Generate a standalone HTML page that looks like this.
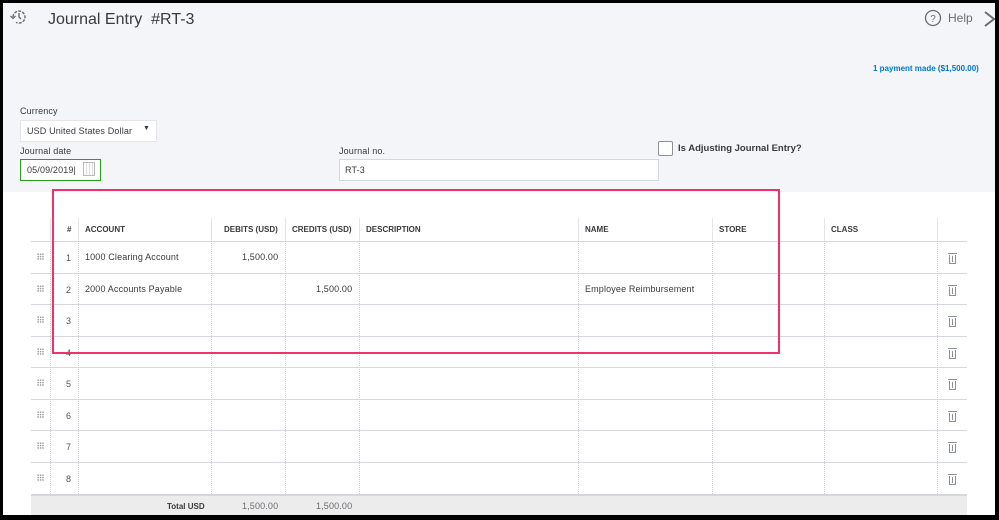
<!DOCTYPE html>
<html><head><meta charset="utf-8"><style>
*{margin:0;padding:0;box-sizing:border-box}
body{width:999px;height:520px;background:#000;position:relative;overflow:hidden;font-family:"Liberation Sans",sans-serif;color:#393a3d}
.page{position:absolute;left:3px;top:3px;width:992px;height:512px;background:#fff;overflow:hidden}
.top{position:absolute;left:0;top:0;width:992px;height:189px;background:#f4f5f8}
.a{position:absolute;white-space:nowrap}
.vl{position:absolute;width:0;border-left:1px dotted #cfd1d6}
.hl{position:absolute;height:1px;background:#d4d7dc}
.hs{position:absolute;width:1px;background:#e3e5e8}
.t{font-size:9px;letter-spacing:0.15px}
.h{font-size:8px;font-weight:bold;color:#393a3d}
.trash{position:absolute;width:7px;height:9px;border:1px solid #8d9096;border-top:none}
.trash:before{content:"";position:absolute;left:-2px;top:-2px;width:9px;height:1px;background:#8d9096}
.trash:after{content:"";position:absolute;left:2px;top:1px;width:1px;height:6px;background:#8d9096}
.dots{position:absolute;width:7px;height:7px;background-image:radial-gradient(#999 0.8px,transparent 0.9px);background-size:2.4px 2.4px}
</style></head><body>
<div class="page">
<div class="top"></div>
<svg class="a" style="left:6px;top:5px" width="20" height="18" viewBox="0 0 20 18"><path d="M4 9a6 6 0 1 1 3 5.3" fill="none" stroke="#6b6c72" stroke-width="1.4" stroke-dasharray="3 1.2"/><path d="M10 5v4l2 2" fill="none" stroke="#6b6c72" stroke-width="1.4"/><path d="M1.5 8l2.5 2.5 2.5-2.5" fill="none" stroke="#6b6c72" stroke-width="1.3"/></svg>
<div class="a" style="left:45px;top:8px;font-size:16px;color:#393a3d">Journal Entry &nbsp;#RT-3</div>
<svg class="a" style="left:921px;top:6px" width="18" height="18"><circle cx="9" cy="9" r="7.5" fill="none" stroke="#6b6c72" stroke-width="1.3"/><text x="9" y="13" font-size="10" text-anchor="middle" fill="#6b6c72" font-family="Liberation Sans">?</text></svg>
<div class="a" style="left:945px;top:8px;font-size:12px;color:#6b6c72">Help</div>
<svg class="a" style="left:981px;top:8px" width="12" height="16"><path d="M1 1l9 7-9 7" fill="none" stroke="#6b6c72" stroke-width="2"/></svg>
<div class="a" style="left:870px;top:61px;font-size:8px;color:#0077c5;font-weight:bold">1 payment made ($1,500.00)</div>
<div class="a t" style="left:17px;top:103px">Currency</div>
<div class="a" style="left:17px;top:117px;width:137px;height:22px;background:#fff;border:1px solid #e3e5e8"></div>
<div class="a t" style="left:24px;top:123px">USD United States Dollar</div>
<div class="a" style="left:140px;top:122px;font-size:7px">▼</div>
<div class="a t" style="left:17px;top:143px">Journal date</div>
<div class="a" style="left:17px;top:156px;width:81px;height:22px;background:#fff;border:1px solid #2ca01c"></div>
<div class="a t" style="left:24px;top:162px">05/09/2019|</div>
<div class="a" style="left:80px;top:159px;width:12px;height:14px;border:1px solid #bbb;background:repeating-linear-gradient(90deg,#fff 0 2px,#ddd 2px 3px)"></div>
<div class="a t" style="left:336px;top:143px">Journal no.</div>
<div class="a" style="left:336px;top:156px;width:320px;height:22px;background:#fff;border:1px solid #d4d7dc"></div>
<div class="a t" style="left:342px;top:162px">RT-3</div>
<div class="a" style="left:655px;top:138px;width:15px;height:15px;border:1px solid #8d9096;border-radius:2px;background:#fff"></div>
<div class="a" style="left:675px;top:140px;font-size:9.5px;font-weight:bold">Is Adjusting Journal Entry?</div>

<div class="hs" style="left:47px;top:215px;height:23px"></div>
<div class="hs" style="left:75px;top:215px;height:23px"></div>
<div class="hs" style="left:208px;top:215px;height:23px"></div>
<div class="hs" style="left:282px;top:215px;height:23px"></div>
<div class="hs" style="left:356px;top:215px;height:23px"></div>
<div class="hs" style="left:575px;top:215px;height:23px"></div>
<div class="hs" style="left:709px;top:215px;height:23px"></div>
<div class="hs" style="left:821px;top:215px;height:23px"></div>
<div class="hs" style="left:934px;top:215px;height:23px"></div>
<div class="a h" style="left:64px;top:222px">#</div>
<div class="a h" style="left:82px;top:222px">ACCOUNT</div>
<div class="a h" style="left:221px;top:222px">DEBITS (USD)</div>
<div class="a h" style="left:289px;top:222px">CREDITS (USD)</div>
<div class="a h" style="left:363px;top:222px">DESCRIPTION</div>
<div class="a h" style="left:582px;top:222px">NAME</div>
<div class="a h" style="left:716px;top:222px">STORE</div>
<div class="a h" style="left:828px;top:222px">CLASS</div>

<div class="vl" style="left:47px;top:238px;height:253px"></div>
<div class="vl" style="left:75px;top:238px;height:253px"></div>
<div class="vl" style="left:208px;top:238px;height:253px"></div>
<div class="vl" style="left:282px;top:238px;height:253px"></div>
<div class="vl" style="left:356px;top:238px;height:253px"></div>
<div class="vl" style="left:575px;top:238px;height:253px"></div>
<div class="vl" style="left:709px;top:238px;height:253px"></div>
<div class="vl" style="left:821px;top:238px;height:253px"></div>
<div class="vl" style="left:934px;top:238px;height:253px"></div>

<div class="hl" style="left:28px;top:238px;width:936px"></div>
<div class="hl" style="left:28px;top:270px;width:936px"></div>
<div class="hl" style="left:28px;top:301px;width:936px"></div>
<div class="hl" style="left:28px;top:333px;width:936px"></div>
<div class="hl" style="left:28px;top:364px;width:936px"></div>
<div class="hl" style="left:28px;top:396px;width:936px"></div>
<div class="hl" style="left:28px;top:427px;width:936px"></div>
<div class="hl" style="left:28px;top:459px;width:936px"></div>
<div class="a" style="left:28px;top:491px;width:936px;height:21px;background:#ececec;border-top:2px solid #d4d7dc"></div>
<div class="a h" style="left:164px;top:499px;font-weight:bold">Total USD</div>
<div class="a t" style="left:239px;top:498px;color:#6b6c72">1,500.00</div>
<div class="a t" style="left:313px;top:498px;color:#6b6c72">1,500.00</div>

<div class="dots" style="left:34px;top:250px"></div><div class="a t" style="left:63px;top:250px;color:#555">1</div><div class="trash" style="left:946px;top:252px"></div>
<div class="dots" style="left:34px;top:282px"></div><div class="a t" style="left:63px;top:282px;color:#555">2</div><div class="trash" style="left:946px;top:284px"></div>
<div class="dots" style="left:34px;top:313px"></div><div class="a t" style="left:63px;top:313px;color:#555">3</div><div class="trash" style="left:946px;top:315px"></div>
<div class="dots" style="left:34px;top:345px"></div><div class="a t" style="left:63px;top:345px;color:#555">4</div><div class="trash" style="left:946px;top:347px"></div>
<div class="dots" style="left:34px;top:376px"></div><div class="a t" style="left:63px;top:376px;color:#555">5</div><div class="trash" style="left:946px;top:378px"></div>
<div class="dots" style="left:34px;top:408px"></div><div class="a t" style="left:63px;top:408px;color:#555">6</div><div class="trash" style="left:946px;top:410px"></div>
<div class="dots" style="left:34px;top:439px"></div><div class="a t" style="left:63px;top:439px;color:#555">7</div><div class="trash" style="left:946px;top:441px"></div>
<div class="dots" style="left:34px;top:471px"></div><div class="a t" style="left:63px;top:471px;color:#555">8</div><div class="trash" style="left:946px;top:473px"></div>

<div class="a t" style="left:82px;top:249px">1000 Clearing Account</div>
<div class="a t" style="left:239px;top:249px">1,500.00</div>
<div class="a t" style="left:82px;top:281px">2000 Accounts Payable</div>
<div class="a t" style="left:313px;top:281px">1,500.00</div>
<div class="a t" style="left:582px;top:281px">Employee Reimbursement</div>

<div class="a" style="left:49px;top:186px;width:728px;height:165px;border:2px solid #f0326a"></div>
</div>
</body></html>
